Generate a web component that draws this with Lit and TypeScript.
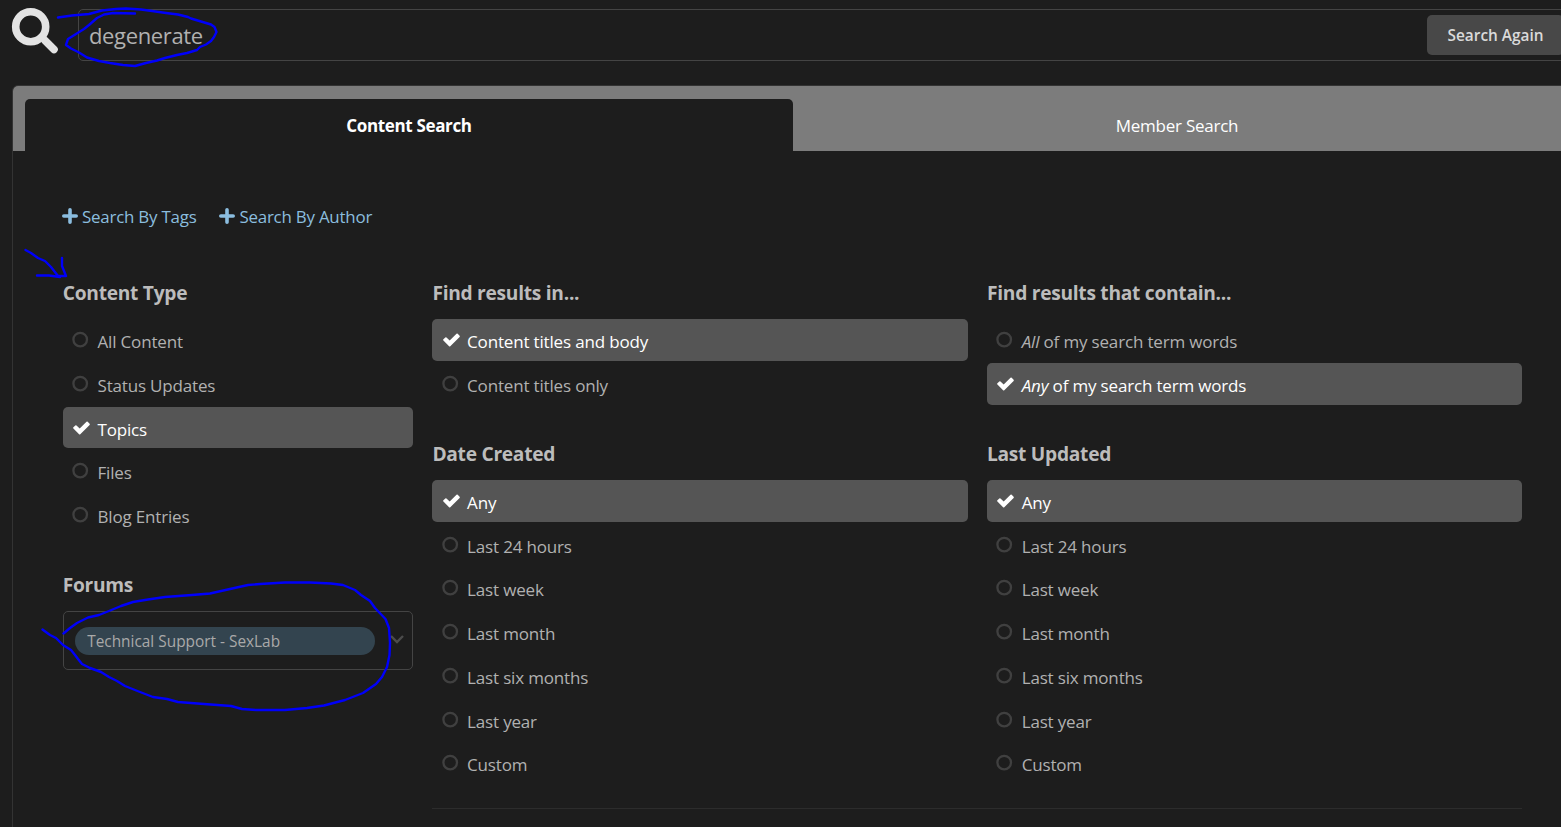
import { LitElement, html, css, svg } from "lit";
import { customElement, property } from "lit/decorators.js";
import { classMap } from "lit/directives/class-map.js";

interface Option {
  text: string;
  em?: string;
  on?: boolean;
}

const PERIODS: Option[] = [
  { text: "Any", on: true },
  { text: "Last 24 hours" },
  { text: "Last week" },
  { text: "Last month" },
  { text: "Last six months" },
  { text: "Last year" },
  { text: "Custom" },
];

@customElement("option-group")
export class OptionGroup extends LitElement {
  @property() heading = "";
  @property({ attribute: false }) options: Option[] = [];

  static styles = css`
    :host { display: block; }
    .heading {
      margin: 0 0 13px;
      font-size: 19.2px;
      line-height: 26px;
      font-weight: 700;
      letter-spacing: -0.28px;
      color: #bcbcbc;
      white-space: nowrap;
    }
    .list { list-style: none; margin: 0; padding: 0; display: flex; flex-direction: column; gap: 2px; }
    .row {
      display: flex;
      height: 41.7px;
      box-sizing: border-box;
      padding-left: 8.2px;
      gap: 7.5px;
      border-radius: 5px;
      color: #b1b1b1;
    }
    .row.on { background: #555; color: #fff; }
    .icon { width: 19px; height: 19px; flex: none; margin-top: 11px; display: block; }
    .label {
      font-size: 17px;
      line-height: 24px;
      letter-spacing: -0.17px;
      padding-top: 11px;
      white-space: nowrap;
    }
  `;

  render() {
    return html`
      <h3 class="heading">${this.heading}</h3>
      <ul class="list">
        ${this.options.map(
          (o) => html`<li class=${classMap({ row: true, on: !!o.on })}>
            <svg class="icon" viewBox="0 0 19 19">
              ${o.on
                ? svg`<path fill="#fff" d="M8.1 16.2 2.4 10.5a.9.9 0 0 1 0-1.2l1.9-1.9a.9.9 0 0 1 1.2 0l3.2 3.2 6.8-6.8a.9.9 0 0 1 1.2 0l1.9 1.9a.9.9 0 0 1 0 1.2l-9.3 9.3a.9.9 0 0 1-1.2 0z"/>`
                : svg`<circle cx="9.2" cy="9.6" r="6.8" fill="none" stroke="#404040" stroke-width="2.3"/>`}
            </svg>
            <span class="label">${o.em ? html`<em>${o.em}</em> ` : ""}${o.text}</span>
          </li>`
        )}
      </ul>
    `;
  }
}

@customElement("app-root")
export class AppRoot extends LitElement {
  static styles = css`
    :host {
      display: block;
      position: relative;
      width: 1561px;
      height: 827px;
      overflow: hidden;
      background: #1d1d1d;
      color: #b1b1b1;
      font-family: "Open Sans", "Noto Sans", sans-serif;
    }
    .search { display: flex; height: 52px; padding: 9px 0 24px 11px; }
    .glass { width: 48px; height: 48px; flex: none; margin: -2px 19px 0 0; }
    .field {
      width: 1500px;
      flex: none;
      box-sizing: border-box;
      height: 52px;
      border: 1px solid #444;
      border-radius: 5px;
      display: flex;
      padding: 5px 0 0 10px;
    }
    .term { font-size: 22px; letter-spacing: -0.35px; line-height: 40px; width: 1338px; flex: none; }
    .again {
      width: 137px;
      height: 40px;
      flex: none;
      box-sizing: border-box;
      border: 0;
      border-radius: 5px;
      background: #484848;
      color: #dadada;
      font: 600 15.4px/40px "Open Sans", sans-serif;
      padding: 1px 0 0;
      white-space: nowrap;
    }
    .panel {
      margin-left: 12px;
      width: 1600px;
      height: 760px;
      box-sizing: border-box;
      border: 1px solid #333;
      border-radius: 6px;
      overflow: hidden;
    }
    .tabs { display: flex; background: #7c7c7c; height: 65px; box-sizing: border-box; padding: 13px 0 0 12px; }
    .tab {
      width: 768px;
      text-align: center;
      font-size: 17px;
      letter-spacing: -0.25px;
      line-height: 53px;
      color: #fff;
      border-radius: 5px 5px 0 0;
    }
    .tab.active { background: #1d1d1d; font-weight: 700; letter-spacing: -0.35px; }
    .links { display: flex; gap: 23px; padding: 54px 0 0 49px; }
    .link {
      display: flex;
      color: #8bbddf;
      font-size: 16.9px;
      letter-spacing: -0.22px;
      line-height: 24px;
      gap: 4px;
      white-space: nowrap;
    }
    .plus { width: 16px; height: 16px; margin-top: 3px; }
    .body { display: grid; grid-template-columns: 350px 1090px; column-gap: 19.6px; padding: 51.3px 0 0 49.8px; }
    .side { display: flex; flex-direction: column; gap: 35.9px; }
    .filters {
      display: grid;
      grid-template-columns: 535.6px 535.2px;
      column-gap: 19px;
      row-gap: 36.4px;
      padding-bottom: 24.400px;
      border-bottom: 1px solid #2c2c2c;
    }
    .heading {
      margin: 0 0 13px;
      font-size: 19.2px;
      line-height: 26px;
      font-weight: 700;
      letter-spacing: -0.33px;
      color: #bcbcbc;
    }
    .select {
      display: flex;
      align-items: center;
      box-sizing: border-box;
      height: 59px;
      border: 1px solid #444;
      border-radius: 5px;
      padding: 1px 0 0 11px;
    }
    .chip {
      width: 300px;
      height: 28px;
      box-sizing: border-box;
      border-radius: 14px;
      background: #33444f;
      color: #a9a9a9;
      font-size: 15.4px;
      line-height: 30px;
      padding-left: 12.4px;
      white-space: nowrap;
    }
    .chev { width: 16px; height: 12px; margin: -3px 0 0 14px; }
    .ink { position: absolute; left: 0; top: 0; width: 1561px; height: 827px; pointer-events: none; }
  `;

  private plus() {
    return html`<svg class="plus" viewBox="0 0 16 16">
      <path d="M8 1.8v12.4M1.8 8h12.4" stroke="#8bbddf" stroke-width="3.6" stroke-linecap="round" />
    </svg>`;
  }

  render() {
    return html`
      <header class="search">
        <svg class="glass" viewBox="0 0 48 48">
          <path d="M34 33.5 43 42.5" stroke="#e3e3e3" stroke-width="7.6" stroke-linecap="round" />
          <circle cx="19.7" cy="19.7" r="15" fill="none" stroke="#e3e3e3" stroke-width="7.6" />
        </svg>
        <div class="field">
          <div class="term">degenerate</div>
          <button class="again">Search Again</button>
        </div>
      </header>
      <main class="panel">
        <nav class="tabs">
          <div class="tab active">Content Search</div>
          <div class="tab">Member Search</div>
        </nav>
        <div class="links">
          <a class="link">${this.plus()}<span>Search By Tags</span></a>
          <a class="link">${this.plus()}<span>Search By Author</span></a>
        </div>
        <div class="body">
          <div class="side">
            <option-group
              heading="Content Type"
              .options=${[
                { text: "All Content" },
                { text: "Status Updates" },
                { text: "Topics", on: true },
                { text: "Files" },
                { text: "Blog Entries" },
              ]}
            ></option-group>
            <section>
              <h3 class="heading">Forums</h3>
              <div class="select">
                <div class="chip">Technical Support - SexLab</div>
                <svg class="chev" viewBox="0 0 16 12">
                  <path d="M2 3 8 9l6-6" fill="none" stroke="#4c4c4c" stroke-width="2.4" />
                </svg>
              </div>
            </section>
          </div>
          <div class="filters">
            <option-group
              heading="Find results in..."
              .options=${[{ text: "Content titles and body", on: true }, { text: "Content titles only" }]}
            ></option-group>
            <option-group
              heading="Find results that contain..."
              .options=${[
                { em: "All", text: "of my search term words" },
                { em: "Any", text: "of my search term words", on: true },
              ]}
            ></option-group>
            <option-group heading="Date Created" .options=${PERIODS}></option-group>
            <option-group heading="Last Updated" .options=${PERIODS}></option-group>
          </div>
        </div>
      </main>
      <svg class="ink" viewBox="0 0 1561 827" fill="none" stroke="#0000fa" stroke-width="2.4" stroke-linecap="round" stroke-linejoin="round">
        <path d="M58 17.5 72 15.5 89 14 102 10.5 116 9 126 8.5 141 9.5 152 11 166 13 178 14.5 188 17 191 18.5 201 21.5 211 24.5 214.5 27 216.5 32 214 37 211 41 206 44.5 200 47 197 50 187 53 177 55 165 58 157 60.5 146 63 135 66 123 65 110 63 99 61 87 57.5 79 52.5 71 48.5 66 45 68 39 76 34 84 29 89 25 97 18 104 14.5 113 13 135 13.5" />
        <path d="M25.5 250 31 253 38 258 45 261 51 267 58 276 66 276 M62 258 62 266 66 276 M37 275.5 49 275.5 60 277" />
        <path d="M42.5 629.5 50 635 56 638 63 645 71 650 75 655 78 659 82 664 90 668 101 672 109 677 117 681 125 686 140 692 153 697 167 699 178 702 204 704 231 706 242 709 256 710 285 710 307 708 324 705.5 345 700 363 693 376 684 382 677 387 667 389.5 655 390 643 389 628 385.5 619 375 608 370 601 361 595 355 590 343 585 331 583.5 310 582.5 285 582.5 260 584 248 585 230 589 210 593.5 192 595 165 597 148 599.5 133 602 121 606 109 611 99 615 88 617.5 77 623 70 628 63.5 633.5" />
      </svg>
    `;
  }
}
